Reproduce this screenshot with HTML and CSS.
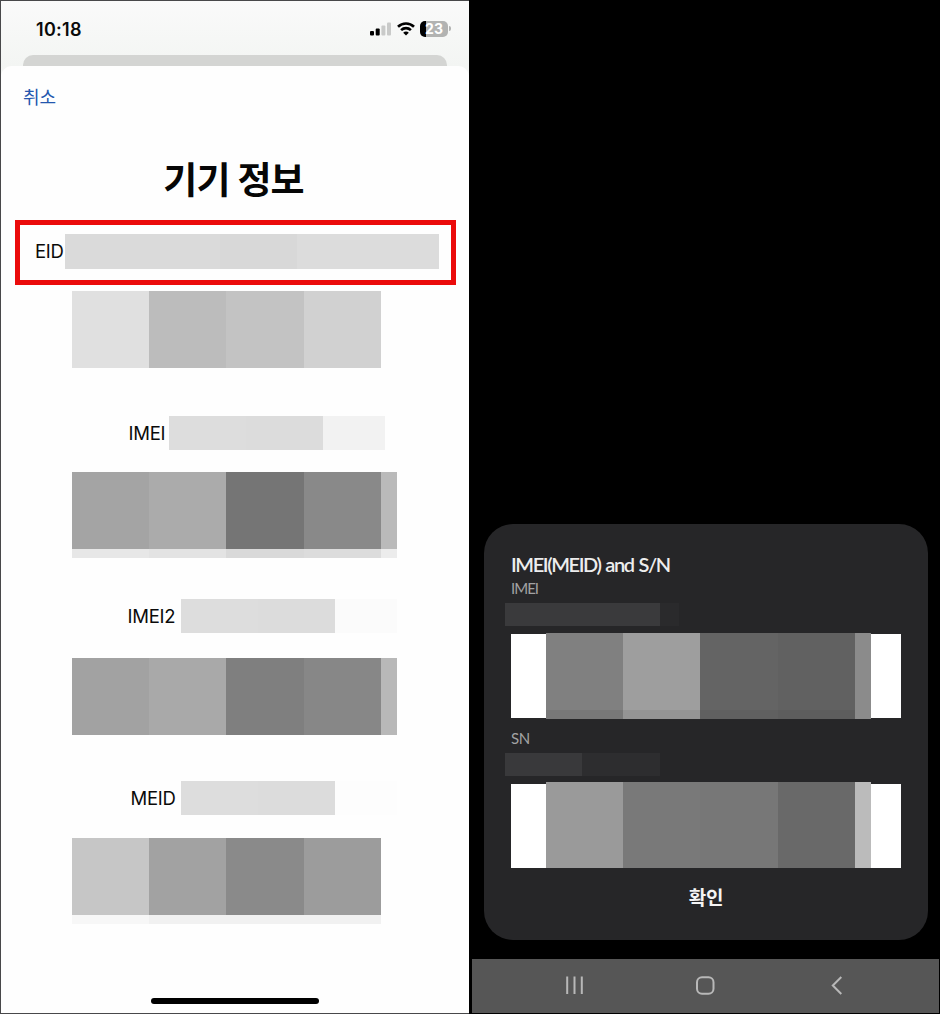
FILE: index.html
```html
<!DOCTYPE html>
<html lang="ko">
<head>
<meta charset="utf-8">
<title>기기 정보</title>
<link rel="stylesheet" href="styles.css">
</head>
<body>
<div class="screens">
  <section class="ios">
    <header class="status">
      <span class="time">10:18</span>
      <svg class="signal" width="22" height="14" viewBox="0 0 22 14"><rect x="0" y="9" width="4" height="4.5" rx="1"/><rect x="5.7" y="6.5" width="4" height="7" rx="1"/><rect x="11.4" y="3.5" width="4" height="10" rx="1" fill="#c9cac9"/><rect x="17" y="0.5" width="4" height="13" rx="1" fill="#c9cac9"/></svg>
      <svg class="wifi" width="18" height="14" viewBox="0 0 18 14" fill="none" stroke="#000" stroke-width="2.6"><path d="M1 4.8C5.5.4 12.5.4 17 4.8M4.1 8.1C6.9 5.4 11.1 5.4 13.9 8.1"/><path d="M9 13.5L6.2 10.7C7.8 9.2 10.2 9.2 11.8 10.7Z" fill="#000" stroke="none"/></svg>
      <span class="battery">23</span><i class="battery-tip"></i>
    </header>
    <div class="back-sheet"></div>
    <main class="sheet">
      <a class="cancel">취소</a>
      <h1 class="title">기기 정보</h1>
      <div class="eid"><span class="label">EID</span><div class="mask mask-eid"><i></i><i></i><i></i></div></div>
      <div class="code code-eid"><i></i><i></i><i></i><i></i></div>
      <div class="row row-imei"><span class="label">IMEI</span><div class="mask mask-short"><i></i><i></i></div><div class="tail"></div></div>
      <div class="code code-imei"><i></i><i></i><i></i><i></i><i></i></div>
      <div class="edge edge-imei"><i></i><i></i><i></i><i></i><i></i></div>
      <div class="row row-imei2"><span class="label">IMEI2</span><div class="mask mask-short"><i></i><i></i></div><div class="tail tail-faint"></div></div>
      <div class="code code-imei2"><i></i><i></i><i></i><i></i><i></i></div>
      <div class="row row-meid"><span class="label">MEID</span><div class="mask mask-short"><i></i><i></i></div><div class="tail tail-none"></div></div>
      <div class="code code-meid"><i></i><i></i><i></i><i></i></div>
      <div class="edge edge-meid"></div>
      <div class="home"></div>
    </main>
  </section>
  <section class="android">
    <div class="dialog">
      <h2 class="dialog-title">IMEI(MEID) and S/N</h2>
      <div class="caption">IMEI</div>
      <div class="number number-imei"><i></i><i></i></div>
      <div class="barcode bar-imei"><i></i><i></i><i></i><i></i><i></i></div>
      <div class="caption caption-sn">SN</div>
      <div class="number number-sn"><i></i><i></i></div>
      <div class="barcode bar-sn"><i></i><i></i><i></i><i></i><i></i></div>
      <div class="confirm">확인</div>
    </div>
    <nav class="nav">
      <svg width="468" height="54" viewBox="0 0 468 54" fill="none" stroke="#b8b8b8" stroke-width="2"><path d="M95.2 17.5V35M102.5 17.5V35M109.8 17.5V35"/><rect x="225" y="18.2" width="16.5" height="16.6" rx="5"/><path d="M369.3 18L360.8 26.5L369.3 35"/></svg>
    </nav>
  </section>
</div>
</body>
</html>
```

FILE: styles.css
```css
* { box-sizing: border-box; }
body { margin: 0; background: #000; }
.screens { display: flex; width: 940px; height: 1014px; overflow: hidden; }
i { display: block; flex: none; }
svg { display: block; flex: none; }

.ios {
  display: flex;
  flex-direction: column;
  width: 469px;
  border: solid #48484a;
  border-width: 1px 0 1px 1px;
  background: linear-gradient(#fafafa, #f3f5f3 65px, #f8f9f8 80px);
  font-family: Inter, "Noto Sans CJK KR", sans-serif;
  color: #0a0a0a;
}
.status { display: flex; height: 54px; padding: 20px 0 0 35px; }
.time { width: 334px; font-size: 18px; line-height: 18px; font-weight: 600; letter-spacing: 0.3px; }
.signal { margin-top: 1px; }
.wifi { margin: 1px 0 0 5px; }
.battery {
  width: 28px;
  height: 16px;
  margin-left: 5px;
  border-radius: 5px;
  background: linear-gradient(90deg, #000 6px, #b2b3b2 6px);
  color: #fff;
  font-size: 14px;
  line-height: 16px;
  font-weight: 700;
  text-align: center;
}
.battery-tip { width: 2px; height: 5px; margin: 5px 0 0 1px; border-radius: 0 2px 2px 0; background: #b2b3b2; }
.back-sheet { height: 11px; margin: 0 22px 0 22px; border-radius: 10px 10px 0 0; background: #d4d5d3; }
.sheet { flex: 1; display: flex; flex-direction: column; align-items: flex-start; background: #fefefe; border-radius: 11px 11px 0 0; }
.cancel { margin: 19px 0 0 22px; font-size: 18px; line-height: 25px; color: #2457ae; letter-spacing: 0; }
.title { margin: 45px 0 0; padding-right: 3px; align-self: stretch; height: 50px; line-height: 51px; text-align: center; font-size: 37px; font-weight: 700; letter-spacing: -0.9px; color: #060606; }
.label { font-size: 18.5px; line-height: 34px; height: 34px; letter-spacing: -0.25px; white-space: nowrap; }
.row .label { line-height: 35px; }
.mask { display: flex; height: 34px; }
.mask i { height: 100%; }
.eid { display: flex; width: 441px; height: 65px; margin: 15px 0 0 14px; padding: 9px 0 0 15px; border: 5px solid #eb0b0b; }
.eid .label { width: 30px; }
.mask-eid { height: 35px; }
.mask-eid i:nth-child(1) { width: 155px; background: #dadada; }
.mask-eid i:nth-child(2) { width: 77px; background: #d8d8d8; }
.mask-eid i:nth-child(3) { width: 142px; background: #dcdcdc; }

.code { display: flex; height: 77px; margin-left: 71px; }
.code i { width: 77px; height: 100%; }
.code i:nth-child(3) { width: 78px; }
.code i:nth-child(5) { width: 16px; }
.code-eid { margin-top: 6px; }
.code-eid i:nth-child(1) { background: #e0e0e0; }
.code-eid i:nth-child(2) { background: #bcbcbc; }
.code-eid i:nth-child(3) { background: #c3c3c3; }
.code-eid i:nth-child(4) { background: #d1d1d1; }
.code-imei { margin-top: 22px; }
.code-imei i:nth-child(1) { background: #a4a4a4; }
.code-imei i:nth-child(2) { background: #ababab; }
.code-imei i:nth-child(3) { background: #757575; }
.code-imei i:nth-child(4) { background: #898989; }
.code-imei i:nth-child(5) { background: #bababa; }
.code-imei2 { margin-top: 25px; }
.code-imei2 i:nth-child(1) { background: #a2a2a2; }
.code-imei2 i:nth-child(2) { background: #a9a9a9; }
.code-imei2 i:nth-child(3) { background: #7f7f7f; }
.code-imei2 i:nth-child(4) { background: #878787; }
.code-imei2 i:nth-child(5) { background: #b8b8b8; }
.code-meid { margin-top: 23px; }
.code-meid i:nth-child(1) { background: #c6c6c6; }
.code-meid i:nth-child(2) { background: #a2a2a2; }
.code-meid i:nth-child(3) { background: #8a8a8a; }
.code-meid i:nth-child(4) { background: #9c9c9c; }
.edge { display: flex; height: 9px; margin-left: 71px; }
.edge i { width: 77px; height: 100%; background: #e7e7e7; }
.edge i:nth-child(2) { background: #e3e3e3; }
.edge i:nth-child(3) { width: 78px; background: #d9d9d9; }
.edge i:nth-child(4) { background: #dcdcdc; }
.edge i:nth-child(5) { width: 16px; background: #ececec; }
.edge-meid { width: 309px; background: linear-gradient(90deg, #f7f7f7 77px, #f1f1f1 77px); }

.row { display: flex; }
.mask-short i { width: 77px; background: #dddddd; }
.mask-short i:nth-child(2) { background: #dcdcdc; }
.tail { width: 62px; height: 34px; background: #f2f2f2; }
.tail-faint { background: #fbfbfb; }
.tail-none { background: #fdfdfd; }
.row-imei { margin: 48px 0 0 127.5px; }
.row-imei .label { width: 40.5px; }
.row-imei2 { margin: 41px 0 0 126.5px; }
.row-imei2 .label { width: 53.5px; }
.row-meid { margin: 46px 0 0 129.5px; }
.row-meid .label { width: 50.5px; }
.home { width: 168px; height: 6px; margin: 74px 0 0 150px; border-radius: 3px; background: #000; }

.android { display: flex; flex-direction: column; width: 471px; padding: 524px 0 1px 3px; font-family: Lato, "Noto Sans CJK KR", sans-serif; }
.dialog { width: 444px; height: 416px; margin-left: 12px; padding: 27px 27px 0; border-radius: 29px; background: #262628; }
.dialog-title { margin: 0; font-size: 20px; line-height: 26px; font-weight: 600; letter-spacing: -1.4px; word-spacing: 1.2px; color: #ededed; white-space: nowrap; }
.caption { margin-top: 2px; height: 18px; font-size: 15px; line-height: 18px; letter-spacing: -1px; color: #a2a2a3; }
.caption-sn { margin-top: 10px; height: 20px; letter-spacing: -0.3px; }
.number { display: flex; height: 23px; margin: 6px 0 0 -6px; }
.number-imei i { width: 155px; background: #3a3a3c; }
.number-imei i:nth-child(2) { width: 19px; background: #2a2a2c; }
.number-sn { margin-top: 4px; }
.number-sn i { width: 77px; background: #39393b; }
.number-sn i:nth-child(2) { width: 78px; background: #2d2d2f; }
.barcode { display: flex; width: 390px; height: 86px; margin-top: 7px; padding-left: 35px; background: linear-gradient(#fff, #fff) 0 1px / 100% 84px no-repeat; }
.barcode i { width: 77px; height: 100%; }
.barcode i:nth-child(3) { width: 78px; }
.barcode i:nth-child(5) { width: 16px; }
.bar-imei i:nth-child(1) { background: linear-gradient(#808080 77px, #787878 77px); }
.bar-imei i:nth-child(2) { background: linear-gradient(#9e9e9e 77px, #949494 77px); }
.bar-imei i:nth-child(3) { background: linear-gradient(#646464 77px, #606060 77px); }
.bar-imei i:nth-child(4) { background: linear-gradient(#616161 77px, #5d5d5d 77px); }
.bar-imei i:nth-child(5) { background: #8b8b8b; }
.bar-sn { margin-top: 6px; background-position: 0 2px; }
.bar-sn i:nth-child(1) { background: #9a9a9a; }
.bar-sn i:nth-child(2) { background: #797979; }
.bar-sn i:nth-child(3) { background: #777777; }
.bar-sn i:nth-child(4) { background: #696969; }
.bar-sn i:nth-child(5) { background: #bbbbbb; }
.confirm { margin-top: 16px; font-size: 19px; line-height: 28px; font-weight: 700; text-align: center; color: #f4f4f4; letter-spacing: -0.3px; }
.nav { width: 467px; height: 54px; margin-top: 19px; overflow: hidden; background: #565656; }
```
